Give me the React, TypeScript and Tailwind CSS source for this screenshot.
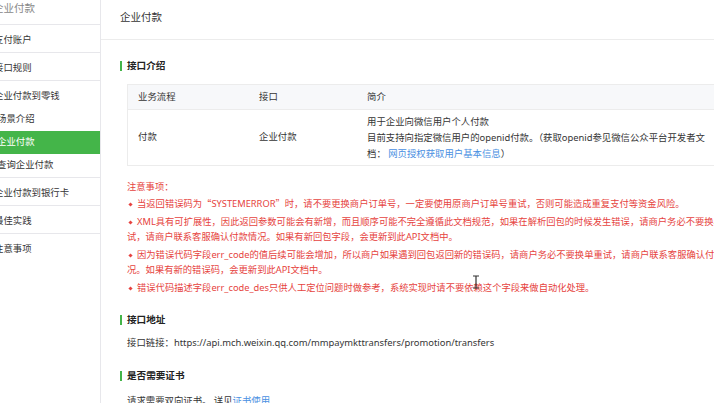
import React from 'react'

const FONT = '"Noto Sans", "Noto Sans CJK SC", sans-serif'

type NavItem = { label: string; sub?: boolean; active?: boolean; group?: boolean }

const NAV: NavItem[][] = [
  [{ label: '支付账户' }],
  [{ label: '接口规则' }],
  [
    { label: '企业付款到零钱', group: true },
    { label: '场景介绍', sub: true },
    { label: '企业付款', sub: true, active: true },
    { label: '查询企业付款', sub: true },
  ],
  [{ label: '企业付款到银行卡' }],
  [{ label: '最佳实践' }],
  [{ label: '注意事项' }],
]

function Sidebar() {
  return (
    <div className="w-[101px] shrink-0 overflow-hidden border-r border-[#e7e7eb] bg-white">
      <div className="h-[25px] whitespace-nowrap border-b border-[#e7e7eb] pt-[1px] text-[10.5px] leading-[14px] text-[#888]">
        <span className="ml-[-7px]">企业付款</span>
      </div>
      {NAV.map((group, i) => (
        <div key={i} className={i < 5 ? 'border-b border-[#e7e7eb]' : ''}>
          {group.map((item) =>
            item.sub ? (
              <div
                key={item.label}
                className={
                  'flex h-[23px] items-center whitespace-nowrap text-[9.4px] ' +
                  (item.active ? 'bg-[#44b549] text-white' : 'text-[#353535]')
                }
              >
                <span className="ml-[-3px]">{item.label}</span>
              </div>
            ) : (
              <div
                key={item.label}
                className="flex h-[27px] items-center whitespace-nowrap pt-[3px] text-[9.4px] text-[#353535]"
              >
                <span className="ml-[-6px]">{item.label}</span>
              </div>
            )
          )}
        </div>
      ))}
    </div>
  )
}

function Heading({ children, className = '' }: { children: React.ReactNode; className?: string }) {
  return (
    <div className={'flex items-center gap-[5px] text-[9.6px] font-bold leading-[14px] text-[#222] ' + className}>
      <span className="h-[10px] w-[2px] bg-[#44b549]" />
      {children}
    </div>
  )
}

function Bullet() {
  return <span className="mr-[5px] ml-[2px] inline-block h-[3px] w-[3px] rotate-45 bg-[#e64340] align-middle" />
}

// wide CJK quote marks, as in the reference
function Q({ children }: { children: React.ReactNode }) {
  return <span style={{ fontFamily: '"Noto Sans CJK SC", sans-serif' }}>{children}</span>
}

export default function App() {
  return (
    <div
      className="relative flex h-[403px] w-[714px] overflow-hidden bg-white text-[#353535]"
      style={{ fontFamily: FONT }}
    >
      <Sidebar />

      <div className="min-w-0 flex-1">
        {/* page title */}
        <div className="h-[40px] border-b border-[#ececec] pl-[19px] pt-[10px] text-[10.5px] leading-[14px] text-[#353535]">
          企业付款
        </div>

        <div className="pl-[19px]">
          <Heading className="mt-[19px]">接口介绍</Heading>

          {/* interface table */}
          <div className="ml-[7px] mt-[11px] w-[700px] border border-[#ececec] text-[9.4px]">
            <div className="flex h-[25px] items-center border-b border-[#ececec] bg-[#f7f8fa]">
              <div className="w-[121px] pl-[10px]">业务流程</div>
              <div className="w-[108px] pl-[10px]">接口</div>
              <div className="pl-[10px]">简介</div>
            </div>
            <div className="flex h-[55px] items-center">
              <div className="w-[121px] pl-[10px]">付款</div>
              <div className="w-[108px] pl-[10px]">企业付款</div>
              <div className="whitespace-nowrap pl-[10px] leading-[16px]">
                <div>用于企业向微信用户个人付款</div>
                <div>目前支持向指定微信用户的openid付款。（获取openid参见微信公众平台开发者文</div>
                <div>
                  档： <span className="text-[#4a90e2]">网页授权获取用户基本信息</span>）
                </div>
              </div>
            </div>
          </div>

          {/* notes */}
          <div className="ml-[7px] mt-[13px] whitespace-nowrap text-[9.3px] leading-[15px] text-[#e64340]">
            <div>注意事项：</div>
            <div className="mt-[2px]">
              <Bullet />
              当返回错误码为<Q>“</Q>SYSTEMERROR<Q>”</Q>时，请不要更换商户订单号，一定要使用原商户订单号重试，否则可能造成重复支付等资金风险。
            </div>
            <div className="mt-[3px]">
              <div>
                <Bullet />
                XML具有可扩展性，因此返回参数可能会有新增，而且顺序可能不完全遵循此文档规范，如果在解析回包的时候发生错误，请商户务必不要换单重
              </div>
              <div>试，请商户联系客服确认付款情况。如果有新回包字段，会更新到此API文档中。</div>
            </div>
            <div className="mt-[3px]">
              <div>
                <Bullet />
                因为错误代码字段err_code的值后续可能会增加，所以商户如果遇到回包返回新的错误码，请商户务必不要换单重试，请商户联系客服确认付款情
              </div>
              <div>况。如果有新的错误码，会更新到此API文档中。</div>
            </div>
            <div className="mt-[3px]">
              <Bullet />
              错误代码描述字段err_code_des只供人工定位问题时做参考，系统实现时请不要依赖这个字段来做自动化处理。
            </div>
          </div>

          <Heading className="mt-[18px]">接口地址</Heading>
          <div className="ml-[7px] mt-[8px] whitespace-nowrap text-[9.4px] leading-[15px] text-[#353535]">
            接口链接：https://api.mch.weixin.qq.com/mmpaymkttransfers/promotion/transfers
          </div>

          <Heading className="mt-[19px]">是否需要证书</Heading>
          <div className="ml-[7px] mt-[10px] whitespace-nowrap text-[9.4px] leading-[15px] text-[#353535]">
            请求需要双向证书。 详见<span className="text-[#4a90e2]">证书使用</span>
          </div>
        </div>
      </div>

      {/* text cursor */}
      <svg className="absolute left-[472px] top-[275px]" width="8" height="14" viewBox="0 0 8 14">
        <path d="M1 1h6M4 1v12M1 13h6" stroke="#333" strokeWidth="1.2" fill="none" />
      </svg>
    </div>
  )
}
